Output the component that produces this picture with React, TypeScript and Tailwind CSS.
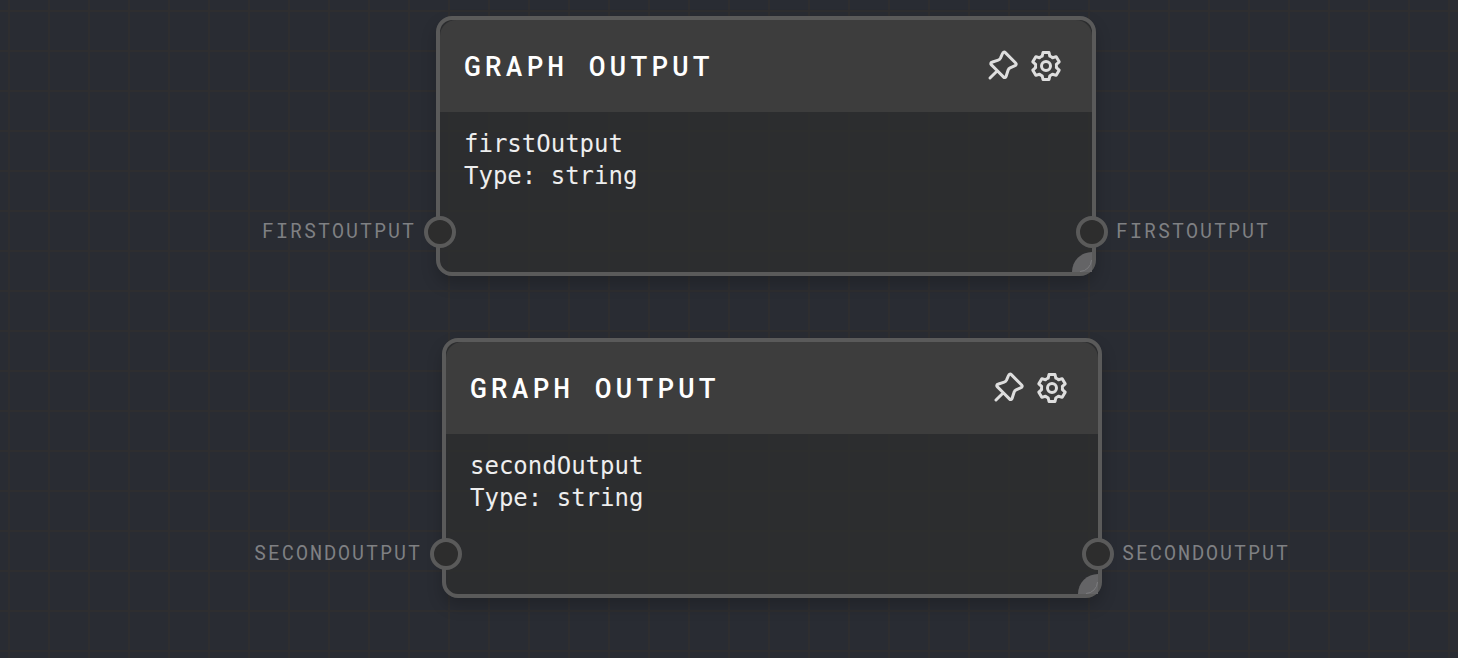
type GraphNode = {
  id: string;
  position: string;
};

const nodes: GraphNode[] = [
  { id: 'firstOutput', position: 'left-[436px] top-4' },
  { id: 'secondOutput', position: 'left-[442px] top-[338px]' },
];

function PinIcon() {
  return (
    <svg
      viewBox="0 0 24 24"
      className="size-9"
      fill="none"
      stroke="currentColor"
      strokeWidth="2"
      strokeLinecap="round"
      strokeLinejoin="round"
      aria-hidden="true"
    >
      <path d="M4 20L8.9 15.2M8.9 15.2L4.8 11.1C4.3 10.6 4.5 9.7 5.2 9.5L9.5 8.1C10.2 7.9 10.7 7.4 11 6.8L12.4 3.5C12.7 2.7 13.6 2.5 14.2 3.1L21.1 10C21.7 10.6 21.5 11.5 20.7 11.8L17.4 13.2C16.8 13.5 16.3 14 16.1 14.7L14.7 19C14.5 19.7 13.6 19.9 13.1 19.4Z" />
    </svg>
  );
}

function CogIcon() {
  return (
    <svg
      viewBox="0 0 24 24"
      className="size-9"
      fill="none"
      stroke="currentColor"
      strokeWidth="2"
      strokeLinecap="round"
      strokeLinejoin="round"
      aria-hidden="true"
    >
      <path d="M14 21h-4l-.551-2.48a6.991 6.991 0 0 1-1.819-1.05l-2.424.763-2-3.464 1.872-1.718a7.055 7.055 0 0 1 0-2.1L3.206 9.232l2-3.464 2.424.763A6.992 6.992 0 0 1 9.45 5.48L10 3h4l.551 2.48a6.992 6.992 0 0 1 1.819 1.05l2.424-.763 2 3.464-1.872 1.718a7.05 7.05 0 0 1 0 2.1l1.872 1.718-2 3.464-2.424-.763a6.99 6.99 0 0 1-1.819 1.052L14 21z" />
      <circle cx="12" cy="12" r="3" />
    </svg>
  );
}

function Port({ name, side }: { name: string; side: 'input' | 'output' }) {
  return (
    <div
      className={
        side === 'input'
          ? 'absolute right-full bottom-6 -mr-4 flex flex-row-reverse items-center gap-2'
          : 'absolute bottom-6 left-full -ml-4 flex items-center gap-2'
      }
    >
      <button
        type="button"
        aria-label={`${name} ${side}`}
        className="size-8 shrink-0 rounded-full border-4 border-[#5a5a5a] bg-[#2d2d2d]"
      />
      <span className="pb-1 font-['Roboto_Mono','DejaVu_Sans_Mono',monospace] text-xl leading-7 tracking-[2px] text-[#7f8083] uppercase">
        {name}
      </span>
    </div>
  );
}

function NodeCard({ node }: { node: GraphNode }) {
  return (
    <article
      className={`absolute w-[660px] rounded-2xl border-4 border-[#5a5a5a] bg-[#2d2e2e]/80 shadow-[0_8px_16px_rgba(0,0,0,0.2)] ${node.position}`}
    >
      <header className="flex h-23 items-center justify-between rounded-t-2xl bg-[#3d3d3d] pr-7 pl-6">
        <h2 className="font-['Roboto_Mono','DejaVu_Sans_Mono',monospace] text-[28px] leading-9 font-medium tracking-[4px] text-white uppercase">
          Graph Output
        </h2>
        <div className="flex gap-2 text-[#dedede]">
          <button type="button" aria-label="Pin node">
            <PinIcon />
          </button>
          <button type="button" aria-label="Node settings">
            <CogIcon />
          </button>
        </div>
      </header>
      <div className="h-40 px-6 py-4 font-['DejaVu_Sans_Mono',monospace] text-2xl leading-8 text-[#eeeeee]">
        <p>{node.id}</p>
        <p>Type: string</p>
      </div>
      <div className="absolute right-0 bottom-0 size-5 overflow-hidden rounded-tl-full rounded-br-xl bg-[#646466]">
        <svg viewBox="0 0 20 20" className="size-5" fill="none" aria-hidden="true">
          <path d="M19.5 8A12 12 0 0 1 8 19.5" stroke="#7c7c7e" strokeWidth="1" />
        </svg>
      </div>
      <Port name={node.id} side="input" />
      <Port name={node.id} side="output" />
    </article>
  );
}

export default function App() {
  return (
    <main className="relative min-h-screen overflow-hidden bg-[#292c33] bg-[linear-gradient(to_right,#2e2e30_2px,transparent_2px),linear-gradient(to_bottom,#2e2e30_2px,transparent_2px)] bg-[size:40px_40px] bg-[position:8px_10px]">
      {nodes.map((node) => (
        <NodeCard key={node.id} node={node} />
      ))}
    </main>
  );
}
